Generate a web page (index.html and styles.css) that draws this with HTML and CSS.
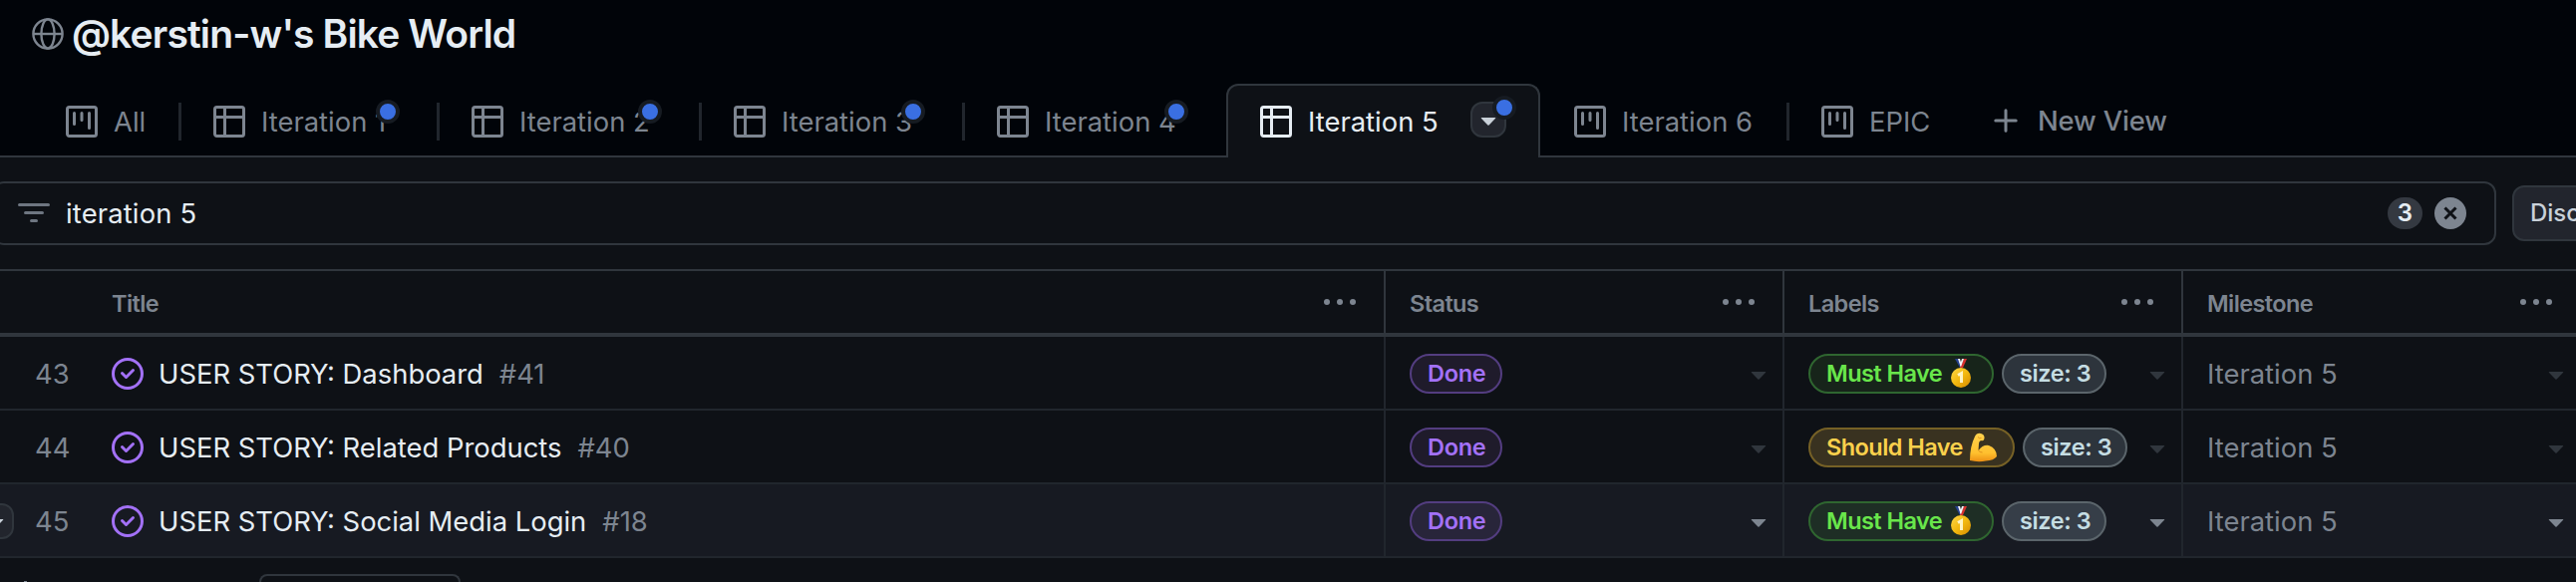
FILE: index.html
```html
<!DOCTYPE html>
<html lang="en">
<head>
<meta charset="utf-8">
<title>Bike World</title>
<link rel="stylesheet" href="styles.css">
</head>
<body>
<svg class="defs" aria-hidden="true">
  <symbol id="board" viewBox="0 0 16 16"><path fill-rule="evenodd" d="M1.75 0A1.75 1.75 0 000 1.75v12.5C0 15.216.784 16 1.75 16h12.5A1.75 1.75 0 0016 14.250V1.75A1.75 1.75 0 0014.25 0H1.75zM1.5 1.75a.25.25 0 01.25-.25h12.5a.25.25 0 01.25.25v12.5a.25.25 0 01-.25.25H1.75a.25.25 0 01-.25-.25V1.75zM11.75 3a.75.75 0 00-.75.75v7.5a.75.75 0 001.5 0v-7.5a.75.75 0 00-.75-.75zm-8.250.75a.75.75 0 011.5 0v5.5a.75.75 0 01-1.5 0v-5.5zM8 3a.75.75 0 00-.75.75v3.5a.75.75 0 001.5 0v-3.5A.75.75 0 008 3z"/></symbol>
  <symbol id="grid" viewBox="0 0 16 16"><path fill-rule="evenodd" d="M1.75 0A1.75 1.75 0 000 1.75v12.5C0 15.216.784 16 1.75 16h12.5A1.75 1.75 0 0016 14.25V1.75A1.75 1.75 0 0014.25 0H1.75zM1.5 1.75a.25.25 0 01.25-.25H5V5H1.500V1.750zM6.500 1.500V5h8V1.750a.25.25 0 00-.25-.25H6.500zM14.500 6.500h-8v8h7.750a.25.25 0 00.25-.25V6.500zM5 14.500v-8H1.500v7.750c0 .138.112.25.25.25H5z"/></symbol>
  <symbol id="caret" viewBox="0 0 16 16"><path d="M4.427 7.427l3.396 3.396a.25.25 0 00.354 0l3.396-3.396A.25.25 0 0011.396 7H4.604a.25.25 0 00-.177.427z"/></symbol>
  <symbol id="kebab" viewBox="0 0 16 16"><circle cx="1.5" cy="8" r="1.5"/><circle cx="8" cy="8" r="1.5"/><circle cx="14.500" cy="8" r="1.5"/></symbol>
  <symbol id="closed" viewBox="0 0 16 16"><path d="M11.28 6.78a.75.75 0 00-1.06-1.06L7.250 8.690 5.780 7.220a.75.75 0 00-1.060 1.060l2 2a.75.75 0 001.060 0l3.500-3.500z"/><path fill-rule="evenodd" d="M16 8A8 8 0 110 8a8 8 0 0116 0zm-1.500 0a6.500 6.500 0 11-13 0 6.500 6.500 0 0113 0z"/></symbol>
  <symbol id="plus" viewBox="0 0 16 16"><path fill="none" stroke="currentColor" stroke-width="1.500" stroke-linecap="round" d="M8 2.900v10.200M2.900 8h10.200"/></symbol>
</svg>

<header class="top">
  <div class="project">
    <svg class="icon" viewBox="0 0 16 16" fill="none" stroke="currentColor" stroke-width="1.2"><circle cx="8" cy="8" r="7.300"/><ellipse cx="8" cy="8" rx="3.300" ry="7.300"/><path d="M.8 8h14.400"/></svg>
    <h1 class="project-name">@kerstin-w's Bike World</h1>
  </div>
  <nav class="tabs">
    <a class="tab tab-all"><svg class="icon"><use href="#board"/></svg><span class="tab-text">All</span></a>
    <i class="sep"></i>
    <a class="tab tab-1"><svg class="icon"><use href="#grid"/></svg><span class="tab-text">Iteration 1</span><b class="dot"></b></a>
    <i class="sep"></i>
    <a class="tab tab-2"><svg class="icon"><use href="#grid"/></svg><span class="tab-text">Iteration 2</span><b class="dot"></b></a>
    <i class="sep"></i>
    <a class="tab"><svg class="icon"><use href="#grid"/></svg><span class="tab-text">Iteration 3</span><b class="dot"></b></a>
    <i class="sep"></i>
    <a class="tab tab-4"><svg class="icon"><use href="#grid"/></svg><span class="tab-text">Iteration 4</span><b class="dot"></b></a>
    <a class="tab tab-active"><svg class="icon"><use href="#grid"/></svg><span class="tab-text">Iteration 5</span><span class="tab-menu"><svg class="icon"><use href="#caret"/></svg><b class="dot"></b></span></a>
    <a class="tab tab-6"><svg class="icon"><use href="#board"/></svg><span class="tab-text">Iteration 6</span></a>
    <i class="sep"></i>
    <a class="tab tab-epic"><svg class="icon"><use href="#board"/></svg><span class="tab-text">EPIC</span></a>
    <a class="new-view"><svg class="icon"><use href="#plus"/></svg><span class="new-text">New View</span></a>
  </nav>
</header>

<div class="toolbar">
  <div class="filter">
    <svg class="icon" viewBox="0 0 16 16"><path d="M.75 3h14.500a.75.75 0 010 1.500H.750a.75.75 0 010-1.500zM3 7.750A.75.75 0 013.750 7h8.500a.75.75 0 010 1.500h-8.500A.75.75 0 013 7.750zm3 4a.75.75 0 01.75-.75h2.500a.75.75 0 010 1.500h-2.500a.75.75 0 01-.75-.75z"/></svg>
    <span class="filter-text">iteration 5</span>
    <span class="count">3</span>
    <svg class="icon clear" viewBox="0 0 16 16"><circle cx="8" cy="8" r="8"/><path class="cross" d="M5.250 5.250l5.500 5.500M10.750 5.250l-5.500 5.500"/></svg>
  </div>
  <button class="discard">Discard</button>
</div>

<main class="table">
  <div class="row head">
    <div class="cell title-cell"><span class="head-text">Title</span><svg class="icon"><use href="#kebab"/></svg></div>
    <div class="cell"><span class="head-text">Status</span><svg class="icon"><use href="#kebab"/></svg></div>
    <div class="cell"><span class="head-text">Labels</span><svg class="icon"><use href="#kebab"/></svg></div>
    <div class="cell"><span class="head-text">Milestone</span><svg class="icon"><use href="#kebab"/></svg></div>
  </div>
  <div class="row">
    <div class="cell title-cell"><span class="num">43</span><svg class="icon done-icon"><use href="#closed"/></svg><span class="story">USER STORY: Dashboard</span><span class="ref">#41</span></div>
    <div class="cell"><span class="pill purple">Done</span><svg class="icon caret"><use href="#caret"/></svg></div>
    <div class="cell"><span class="pill green">Must Have<svg class="emoji medal" viewBox="0 0 22 30"><use href="#medal"/></svg></span><span class="pill grey">size: 3</span><svg class="icon caret"><use href="#caret"/></svg></div>
    <div class="cell"><span class="milestone">Iteration 5</span><svg class="icon caret"><use href="#caret"/></svg></div>
  </div>
  <div class="row">
    <div class="cell title-cell"><span class="num">44</span><svg class="icon done-icon"><use href="#closed"/></svg><span class="story">USER STORY: Related Products</span><span class="ref">#40</span></div>
    <div class="cell"><span class="pill purple">Done</span><svg class="icon caret"><use href="#caret"/></svg></div>
    <div class="cell"><span class="pill yellow">Should Have<svg class="emoji arm" viewBox="0 0 28 30"><use href="#arm"/></svg></span><span class="pill grey">size: 3</span><svg class="icon caret"><use href="#caret"/></svg></div>
    <div class="cell"><span class="milestone">Iteration 5</span><svg class="icon caret"><use href="#caret"/></svg></div>
  </div>
  <div class="row hover">
    <div class="cell title-cell"><span class="row-menu"><svg class="icon"><use href="#caret"/></svg></span><span class="num">45</span><svg class="icon done-icon"><use href="#closed"/></svg><span class="story">USER STORY: Social Media Login</span><span class="ref">#18</span></div>
    <div class="cell"><span class="pill purple">Done</span><svg class="icon caret"><use href="#caret"/></svg></div>
    <div class="cell"><span class="pill green">Must Have<svg class="emoji medal" viewBox="0 0 22 30"><use href="#medal"/></svg></span><span class="pill grey">size: 3</span><svg class="icon caret"><use href="#caret"/></svg></div>
    <div class="cell"><span class="milestone">Iteration 5</span><svg class="icon caret"><use href="#caret"/></svg></div>
  </div>
</main>
<footer class="add-row"><i class="add-tip"></i><span class="hint"></span></footer>

<svg class="defs" aria-hidden="true">
  <defs>
    <linearGradient id="gold" x1="0" y1="0" x2="1" y2="1"><stop offset="0" stop-color="#ffd84a"/><stop offset=".5" stop-color="#f3b90f"/><stop offset="1" stop-color="#d48a00"/></linearGradient>
    <linearGradient id="skin" x1="0" y1="0" x2="0" y2="1"><stop offset="0" stop-color="#ffd24d"/><stop offset=".7" stop-color="#ffc02e"/><stop offset="1" stop-color="#ec8f13"/></linearGradient>
  </defs>
  <symbol id="medal" viewBox="0 0 22 30"><path fill="#26418f" d="M5 0h4l3 9h-2z"/><path fill="#f4f4f8" d="M8 0h2l2 7-1 2z"/><path fill="#d8322f" d="M17 0h-3l-4 9h3z"/><path fill="#f4f4f8" d="M14 0h-2l-2 6 1 2z"/><circle cx="11" cy="19" r="10" fill="url(#gold)"/><path fill="none" stroke="#fff4c2" stroke-width="3" d="M8 16.500l3.500-2v9.500"/></symbol>
  <symbol id="arm" viewBox="0 0 28 30"><path fill="url(#skin)" d="M6 4Q8 0 12 1q4 1 3.500 5-.5 3-3.500 2-2 1-2 3l-.5 7q4.500-6 10.500-5 8 3 8 11-3 4-11 4.500-8 1.500-16-.5Q1 14 6 4z"/><path fill="none" stroke="#e0901c" d="M9 4.500q1.500 2 3.500 1M9.500 18q1.500 2 4 2"/></symbol>
</svg>
</body>
</html>
```
FILE: styles.css
```css
* { box-sizing: border-box; }
body { margin: 0; width: 2584px; height: 584px; overflow: hidden; background: #0e1116; color: #e6edf3; font-family: Inter, "Liberation Sans", sans-serif; font-size: 27.4px; line-height: 40px; }
.defs { position: absolute; width: 0; height: 0; }
.icon { width: 32px; height: 32px; flex: none; fill: currentColor; display: block; }

.top { height: 158px; background: #010409; border-bottom: 2px solid #30363d; color: #7d8590; }
.project { display: flex; align-items: center; height: 84px; padding: 0 0 16px 32px; }
.project .icon { fill: none; }
.project-name { margin: 0 0 0 8px; font-size: 39px; font-weight: 600; letter-spacing: -.86px; color: #e6edf3; white-space: nowrap; }
.tabs { display: flex; height: 74px; align-items: stretch; }
.tab { position: relative; display: flex; align-items: center; flex: none; width: 261px; padding: 2px 0 0 32px; white-space: nowrap; }
.tab-text { margin-left: 16px; }
.tab-all { width: 179px; padding-left: 66px; }
.tab-1 { width: 256px; }
.tab-2 { width: 260px; }
.tab-4 { width: 262px; }
.sep { width: 3px; height: 38px; margin-top: 19px; background: #21262d; flex: none; }
.dot { position: absolute; left: 200px; top: 16px; width: 24px; height: 24px; border: 4px solid #161b22; border-radius: 50%; background: #3a6fe2; }
.tab-1 .dot { left: 195px; }
.tab-2 .dot { left: 199px; }
.tab-active { width: 315px; padding: 0 0 0 32px; border: 2px solid #30363d; border-bottom: 0; border-radius: 12px 12px 0 0; background: #0e1116; color: #e6edf3; }
.tab-menu { position: relative; display: flex; align-items: center; justify-content: center; width: 36px; height: 36px; margin: -4px 32px 0 auto; background: #22252d; border: 2px solid #30363d; border-radius: 12px; color: #c9d1d9; }
.tab-menu .dot { left: 20px; top: -8px; }
.tab-6 { width: 247px; padding-left: 34px; }
.tab-epic { width: 141px; }
.new-view { display: flex; align-items: center; margin-left: 60px; font-weight: 500; white-space: nowrap; }
.new-text { margin-left: 16px; letter-spacing: -.15px; }

.toolbar { display: flex; align-items: center; height: 112px; gap: 16px; }
.filter { display: flex; align-items: center; width: 2512px; height: 64px; margin-left: -8px; padding: 0 28px 0 24px; border: 2px solid #30363d; border-radius: 12px; color: #6e7681; flex: none; }
.filter-text { flex: 1; margin-left: 16px; letter-spacing: .15px; color: #e6edf3; }
.count { width: 35px; height: 32px; line-height: 32px; border-radius: 16px; background: #343941; color: #e6edf3; font-size: 24px; font-weight: 600; text-align: center; }
.clear { margin-left: 12px; color: #7d8590; }
.cross { stroke: #0e1116; stroke-width: 1.5; fill: none; }
.discard { flex: none; width: 128px; height: 56px; padding: 0 0 0 16px; border: 2px solid #30363d; border-radius: 12px; background: #22252d; color: #c9d1d9; font: 500 24px/40px Inter, sans-serif; text-align: left; }

.table { border-top: 2px solid #30363d; }
.row { display: grid; grid-template-columns: 1390px 400px 400px 394px; height: 74px; }
.cell { display: flex; align-items: center; padding: 2px 8px 0 24px; border-right: 2px solid #21262d; border-bottom: 2px solid #21262d; white-space: nowrap; }
.cell:last-child { border-right: 0; padding-right: 4px; }
.head { height: 66px; color: #7d8590; font-size: 23.5px; font-weight: 600; }
.head .cell { padding-top: 0; padding-right: 28px; border-right-color: #30363d; border-bottom: 4px solid #30363d; }
.head .cell:last-child { padding-right: 24px; }
.head-text { padding-top: 3px; letter-spacing: -.6px; }
.head .icon { margin-left: auto; }
.head .title-cell { padding-left: 112px; }
.title-cell { position: relative; padding-left: 35px; }
.num { width: 77px; color: #7d8590; }
.done-icon { color: #a371f7; }
.story { margin-left: 15px; }
.ref { margin-left: 16px; color: #7d8590; }
.pill { display: flex; align-items: center; height: 40px; padding: 0 16px; border: 2px solid; border-radius: 20px; font-size: 23.5px; font-weight: 600; letter-spacing: -.55px; }
.pill + .pill { margin-left: 8px; }
.purple { width: 93px; color: #a371f7; background: #1f1b2b; border-color: #533d80; letter-spacing: -.3px; }
.green { width: 186px; color: #69e64b; background: #17241a; border-color: #2f6630; }
.yellow { width: 207px; color: #f9d04c; background: #393220; border-color: #766126; }
.grey { width: 105px; color: #c5dde3; background: #2d343c; border-color: #5b656b; letter-spacing: -.4px; }
.emoji { height: 30px; flex: none; }
.medal { width: 22px; margin-left: auto; margin-right: 4px; }
.arm { width: 28px; margin-left: auto; }
.milestone { color: #7d8590; }
.caret { margin-left: auto; color: #30363d; }
.hover .cell { background: #171a22; }
.hover .caret { color: #7d8590; }
.hover .purple { background: #28253a; }
.hover .green { background: #1e2e25; }
.hover .grey { background: #363e48; }
.row-menu { position: absolute; left: -22px; top: 19px; width: 36px; height: 36px; border: 2px solid #30363d; border-radius: 12px; background: #22252d; color: #c9d1d9; }
.add-row { display: flex; height: 24px; padding-left: 24px; overflow: hidden; }
.add-tip { width: 3px; height: 1px; margin-top: 23px; background: #7d8590; }
.hint { width: 202px; height: 8px; margin: 16px 0 0 233px; border: 2px solid #30363d; border-bottom: 0; border-radius: 12px 12px 0 0; }
```
